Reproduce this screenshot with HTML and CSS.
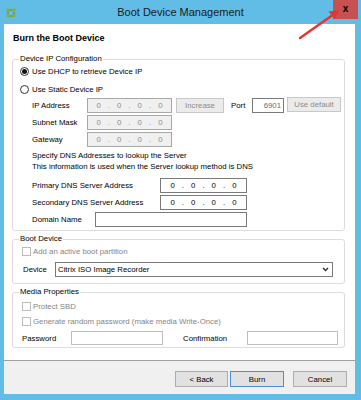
FILE: index.html
```html
<!DOCTYPE html>
<html lang="en">
<head>
<meta charset="utf-8">
<title>Boot Device Management</title>
<link rel="stylesheet" href="styles.css">
</head>
<body>
<div class="window">
  <div class="titlebar">
    <svg class="app-icon" viewBox="0 0 10 10" width="10" height="10">
      <rect x="2" y="2" width="6" height="6" fill="none" stroke="#6f8f25" stroke-width="1.2"/>
      <circle cx="2" cy="2" r="1.8" fill="#8db03a"/>
      <circle cx="8" cy="2" r="1.8" fill="#8db03a"/>
      <circle cx="2" cy="8" r="1.8" fill="#8db03a"/>
      <circle cx="8" cy="8" r="1.8" fill="#8db03a"/>
    </svg>
    <div class="title">Boot Device Management</div>
    <div class="close">x</div>
  </div>

  <div class="client">
    <div class="content">
      <h1 class="heading">Burn the Boot Device</h1>

      <fieldset class="group g-ip">
        <legend>Device IP Configuration</legend>
        <div class="opt"><span class="radio checked"></span>Use DHCP to retrieve Device IP</div>
        <div class="opt opt-2"><span class="radio"></span>Use Static Device IP</div>

        <div class="field f-first">
          <span class="lbl w-ip">IP Address</span>
          <span class="ipbox disabled"><i>0</i><i>.</i><i>0</i><i>.</i><i>0</i><i>.</i><i>0</i></span>
          <span class="btn btn-dis btn-inc">Increase</span>
          <span class="lbl w-port">Port</span>
          <span class="txt port">6901</span>
          <span class="btn btn-dis btn-def">Use default</span>
        </div>
        <div class="field">
          <span class="lbl w-ip">Subnet Mask</span>
          <span class="ipbox disabled"><i>0</i><i>.</i><i>0</i><i>.</i><i>0</i><i>.</i><i>0</i></span>
        </div>
        <div class="field">
          <span class="lbl w-ip">Gateway</span>
          <span class="ipbox disabled"><i>0</i><i>.</i><i>0</i><i>.</i><i>0</i><i>.</i><i>0</i></span>
        </div>

        <p class="note">Specify DNS Addresses to lookup the Server<br>This information is used when the Server lookup method is DNS</p>

        <div class="field f-dns">
          <span class="lbl w-dns">Primary DNS Server Address</span>
          <span class="ipbox dns"><i>0</i><i>.</i><i>0</i><i>.</i><i>0</i><i>.</i><i>0</i></span>
        </div>
        <div class="field">
          <span class="lbl w-dns">Secondary DNS Server Address</span>
          <span class="ipbox dns"><i>0</i><i>.</i><i>0</i><i>.</i><i>0</i><i>.</i><i>0</i></span>
        </div>
        <div class="field">
          <span class="lbl w-dom">Domain Name</span>
          <span class="txt domain"></span>
        </div>
      </fieldset>

      <fieldset class="group g-boot">
        <legend>Boot Device</legend>
        <div class="chk-row"><span class="chk"></span>Add an active boot partition</div>
        <div class="field f-device">
          <span class="lbl w-dev">Device</span>
          <span class="select">Citrix ISO Image Recorder
            <svg class="chev" viewBox="0 0 7 5" width="7" height="5"><path d="M1 1 L3.5 3.5 L6 1" fill="none" stroke="#333" stroke-width="1.5"/></svg>
          </span>
        </div>
      </fieldset>

      <fieldset class="group g-media">
        <legend>Media Properties</legend>
        <div class="chk-row cr-1"><span class="chk"></span>Protect SBD</div>
        <div class="chk-row cr-2"><span class="chk"></span>Generate random password (make media Write-Once)</div>
        <div class="field f-pass">
          <span class="lbl w-pass">Password</span>
          <span class="txt pass"></span>
          <span class="lbl w-conf">Confirmation</span>
          <span class="txt conf"></span>
        </div>
      </fieldset>
    </div>

    <div class="footer">
      <span class="btn btn-back">&lt; Back</span>
      <span class="btn btn-burn">Burn</span>
      <span class="btn btn-cancel">Cancel</span>
    </div>
  </div>

  <svg class="arrow" viewBox="0 0 361 400" width="361" height="400">
    <line x1="300" y1="38" x2="332" y2="15.5" stroke="#e8342a" stroke-width="2.4" stroke-linecap="round"/>
    <polygon points="339,10.5 334.5,19 328.5,11.5" fill="#e8342a"/>
  </svg>
</div>
</body>
</html>
```

FILE: styles.css
```css
* { box-sizing: border-box; }
html, body { margin: 0; padding: 0; }
body {
  width: 361px;
  height: 400px;
  overflow: hidden;
  background: #61bde6;
  font-family: "Liberation Sans", Arial, sans-serif;
  font-size: 7.8px;
  color: #000;
}
.window {
  position: relative;
  height: 400px;
  display: flex;
  flex-direction: column;
}

/* title bar */
.titlebar {
  height: 24px;
  flex: none;
  display: grid;
  grid-template-columns: 1fr auto 1fr;
  align-items: start;
}
.app-icon { margin: 8px 0 0 6px; }
.title {
  font-size: 11px;
  line-height: 24px;
  color: #1b1b1b;
}
.close {
  justify-self: end;
  margin-right: 3px;
  width: 25px;
  height: 19px;
  background: #c75050;
  display: flex;
  align-items: center;
  justify-content: center;
  font-weight: bold;
  font-size: 10px;
  line-height: 1;
  padding-bottom: 2px;
}

/* client */
.client {
  margin: 0 6px 0 4px;
  height: 370px;
  background: #fff;
  display: flex;
  flex-direction: column;
}
.content {
  height: 337px;
  flex: none;
  border-bottom: 1px solid #a0a0a0;
  padding: 8px 10px 0 8px;
}
.heading {
  margin: 0 0 0 1px;
  font-size: 9px;
  font-weight: bold;
  line-height: 13px;
}

/* group boxes */
.group {
  margin: 2px 0 0;
  padding: 0 6px 3px;
  border: 1px solid #dcdcdc;
  border-radius: 3px;
  min-width: 0;
}
.group legend {
  padding: 0 1px;
  line-height: 12px;
  font-size: 7.8px;
}
.g-ip { margin-top: 8px; }
.g-boot { padding-bottom: 6px; }
.g-media { padding-bottom: 2px; }

.opt {
  height: 12px;
  display: flex;
  align-items: center;
  padding-left: 1px;
}
.opt-2 { margin-top: 6px; }
.radio {
  width: 9px;
  height: 9px;
  border: 1px solid #333;
  border-radius: 50%;
  margin-right: 3px;
  background: #fff;
  display: flex;
  align-items: center;
  justify-content: center;
}
.radio.checked::after {
  content: "";
  width: 5px;
  height: 5px;
  border-radius: 50%;
  background: #111;
}

.field {
  height: 15px;
  margin-top: 2px;
  display: flex;
  align-items: center;
  padding-left: 13px;
}
.f-first { margin-top: 3px; }
.f-dns { margin-top: 6px; }
.lbl { flex: none; white-space: nowrap; }
.w-ip { width: 55px; }
.w-port { width: 21px; margin-left: 7px; }
.w-dns { width: 128px; }
.w-dom { width: 63px; }

.ipbox {
  flex: none;
  height: 15px;
  border: 1px solid #7a7a7a;
  background: #fff;
  display: flex;
  align-items: center;
  justify-content: center;
}
.ipbox i {
  font-style: normal;
  width: 10.3px;
  text-align: center;
}
.ipbox.disabled {
  width: 85px;
  background: #f0f0f0;
  border-color: #a8a8a8;
  color: #8c8c8c;
}
.ipbox.dns { width: 87px; height: 15px; }

.txt {
  flex: none;
  height: 15px;
  border: 1px solid #7a7a7a;
  background: #fff;
}
.port {
  width: 32px;
  text-align: right;
  padding-right: 2px;
  line-height: 13px;
  color: #6d6d6d;
}
.domain { width: 152px; }

.btn {
  flex: none;
  height: 16px;
  display: flex;
  align-items: center;
  justify-content: center;
  background: #e1e1e1;
  border: 1px solid #adadad;
}
.btn-dis {
  height: 15px;
  background: #ebebeb;
  border-color: #c8c8c8;
  color: #8c8c8c;
}
.btn-inc { width: 48px; margin-left: 4px; }
.btn-def { width: 54px; margin-left: 3px; margin-top: -2px; }

.note {
  margin: 3px 0 0;
  padding-left: 13px;
  line-height: 11px;
}

/* checkboxes */
.chk-row {
  height: 12px;
  display: flex;
  align-items: center;
  padding-left: 3px;
  color: #858585;
}
.chk {
  width: 9px;
  height: 9px;
  border: 1px solid #bcbcbc;
  background: #fff;
  margin-right: 2px;
}
.cr-1 { margin-top: 2px; }
.cr-2 { margin-top: 3px; }

.f-device { margin-top: 5px; padding-left: 4px; }
.w-dev { width: 32px; }
.select {
  flex: none;
  width: 278px;
  height: 15px;
  border: 1px solid #7a7a7a;
  background: #fff;
  display: flex;
  align-items: center;
  justify-content: space-between;
  padding: 0 3px 0 2px;
}
.chev { flex: none; }

.f-pass { height: 14px; margin-top: 4px; padding-left: 3px; }
.w-pass { width: 49px; }
.w-conf { width: 64px; margin-left: 20px; }
.pass, .conf { height: 14px; border-color: #bfbfbf; }
.pass { width: 92px; }
.conf { width: 91px; }

/* footer */
.footer {
  flex: 1;
  background: #f0f0f0;
  display: flex;
  justify-content: flex-end;
  align-items: flex-start;
  padding: 10px 8px 0 0;
}
.btn-back { width: 53px; }
.btn-burn { width: 54px; margin-left: 2px; border-color: #4a8fd0; }
.btn-cancel { width: 54px; margin-left: 9px; }

/* annotation arrow */
.arrow {
  position: absolute;
  left: 0;
  top: 0;
  pointer-events: none;
}
```
